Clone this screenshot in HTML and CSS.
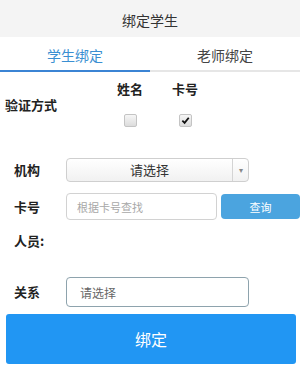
FILE: index.html
```html
<!DOCTYPE html>
<html lang="zh-CN">
<head>
    <meta charset="UTF-8">
    <meta name="viewport" content="width=device-width, initial-scale=1.0">
    <title>绑定学生</title>
    <link rel="stylesheet" href="styles.css">
</head>
<body>
    <div class="top">绑定学生</div>

    <!-- Pestañas -->
    <div class="tabs">
        <div class="tab active">学生绑定</div>
        <div class="tab">老师绑定</div>
    </div>

    <div class="verify">
        <div class="verify-label">验证方式</div>
        <div class="options">
            <div class="option">
                <span>姓名</span>
                <span class="check"></span>
            </div>
            <div class="option">
                <span>卡号</span>
                <span class="check">
                    <svg viewBox="0 0 10 10" width="9" height="9"><path d="M1.5 5.2 L4 7.6 L8.6 2" fill="none" stroke="#111" stroke-width="2"/></svg>
                </span>
            </div>
        </div>
    </div>

    <div class="row row-org">
        <div class="label">机构</div>
        <div class="select">
            <span class="select-text">请选择</span>
            <span class="select-arrow">▾</span>
        </div>
    </div>

    <div class="row row-card">
        <div class="label">卡号</div>
        <input class="card-input" type="text" placeholder="根据卡号查找">
        <button class="query">查询</button>
    </div>

    <div class="row row-people">
        <div class="label">人员:</div>
    </div>

    <div class="row row-rel">
        <div class="label">关系</div>
        <input class="rel-input" type="text" placeholder="请选择">
    </div>

    <button class="bind">绑定</button>
</body>
</html>
```

FILE: styles.css
```css
body {
    margin: 0;
    width: 300px;
    background: #fff;
    font-family: "Noto Sans CJK SC", "Noto Sans", sans-serif;
    color: #222;
}

/* Cabecera */
.top {
    height: 37px;
    line-height: 40px;
    background: #f4f4f4;
    text-align: center;
    font-size: 14px;
    color: #333;
}

/* Pestañas */
.tabs {
    display: flex;
}

.tab {
    flex: 1;
    height: 33px;
    line-height: 36px;
    text-align: center;
    font-size: 14px;
    color: #444;
    border-bottom: 2px solid #e6e6e6;
}

.tab.active {
    color: #3a8fd2;
    border-bottom-color: #3b84d4;
}

/* Método de verificación */
.verify {
    display: flex;
    align-items: center;
    padding: 10px 0 0 5px;
}

.verify-label {
    width: 52px;
    font-size: 13px;
    font-weight: bold;
}

.options {
    display: flex;
    gap: 25px;
    margin-left: 58px;
}

.option {
    width: 30px;
    display: flex;
    flex-direction: column;
    align-items: center;
    gap: 18px;
    font-size: 13px;
    font-weight: bold;
    line-height: 14px;
}

.check {
    width: 11px;
    height: 11px;
    border: 1px solid #c4c4c4;
    border-radius: 2px;
    background: linear-gradient(#f6f6f6, #dcdcdc);
    display: flex;
    align-items: center;
    justify-content: center;
}

/* Filas del formulario */
.row {
    display: flex;
    align-items: center;
    padding-left: 14px;
}

.label {
    width: 52px;
    font-size: 13px;
    font-weight: bold;
    line-height: 18px;
}

.row-org { margin-top: 31px; }
.row-card { margin-top: 11px; }
.row-people { margin-top: 12px; }
.row-rel { margin-top: 27px; }

.select {
    box-sizing: border-box;
    width: 183px;
    height: 24px;
    display: flex;
    border: 1px solid #cfcfcf;
    border-radius: 4px;
    background: linear-gradient(#fff, #f1f1f1);
}

.select-text {
    flex: 1;
    text-align: center;
    line-height: 22px;
    font-size: 13px;
    color: #333;
}

.select-arrow {
    width: 15px;
    border-left: 1px solid #d4d4d4;
    text-align: center;
    line-height: 22px;
    font-size: 8px;
    color: #888;
}

.card-input {
    box-sizing: border-box;
    width: 151px;
    height: 27px;
    margin: 0;
    padding: 0 0 0 10px;
    border: 1px solid #d2d2d2;
    border-radius: 4px;
    font-family: inherit;
    font-size: 11px;
    outline: none;
}

.card-input::placeholder { color: #a8a8a8; }

.query {
    width: 79px;
    height: 25px;
    margin-left: 4px;
    border: none;
    border-radius: 4px;
    background: #4ba4df;
    color: #fff;
    font-family: inherit;
    font-size: 11px;
}

.rel-input {
    box-sizing: border-box;
    width: 183px;
    height: 30px;
    margin: 0;
    padding: 0 0 0 13px;
    border: 1px solid #8ea3ad;
    border-radius: 4px;
    font-family: inherit;
    font-size: 12px;
    outline: none;
}

.rel-input::placeholder { color: #666; }

/* Botón principal */
.bind {
    display: block;
    width: 290px;
    height: 50px;
    margin: 7px 0 0 6px;
    border: none;
    border-radius: 3px;
    background: #2196f3;
    color: #fff;
    font-family: inherit;
    font-size: 16px;
}
```
